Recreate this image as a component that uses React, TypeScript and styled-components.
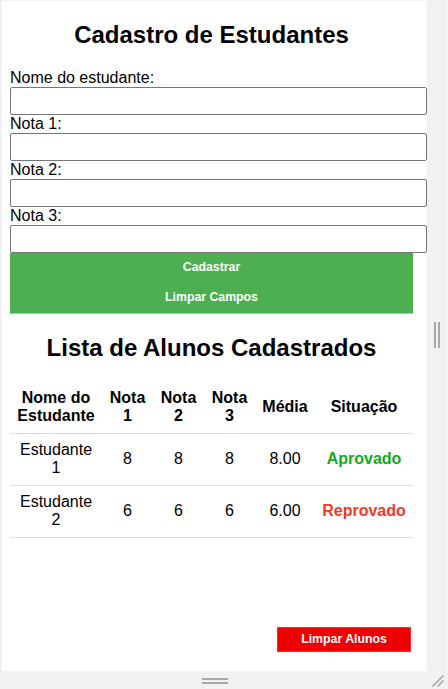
import React from "react";
import styled, { createGlobalStyle } from "styled-components";

const Global = createGlobalStyle`
  html, body { margin: 0; padding: 0; }
  body {
    background: #f0f1f3;
    font-family: "Liberation Sans", Arial, sans-serif;
    color: #000;
  }
`;

const Frame = styled.div`
  display: grid;
  grid-template-columns: 425px 1fr;
  grid-template-rows: 670px 1fr;
  padding: 1px 0 0 2px;
  height: 689px;
  width: 448px;
  box-sizing: border-box;
  background: #f0f1f3;
`;

const Panel = styled.main`
  background: #fff;
  display: flex;
  flex-direction: column;
  padding: 0 14px 0 8px;
  min-width: 0;
`;

const Title = styled.h2`
  font-size: 24px;
  font-weight: bold;
  text-align: center;
  margin: 0.83em 0;
  line-height: normal;
`;

const Form = styled.form`
  display: flex;
  flex-direction: column;
`;

const Label = styled.label`
  display: block;
  font-size: 16px;
  line-height: normal;
`;

const Input = styled.input`
  display: block;
  width: 100%;
  box-sizing: content-box;
  padding: 4px 6px;
  border: 1px solid #767676;
  border-radius: 2px;
  font-size: 16px;
  line-height: 18px;
  height: 18px;
  font-family: inherit;
  background: #fff;
  outline: none;
`;

const ButtonGroup = styled.div`
  display: flex;
  flex-direction: column;
  border-bottom: 1px solid #8fd48f;
`;

const GreenButton = styled.button`
  display: block;
  width: 100%;
  background: #4caf50;
  color: #fff;
  border: none;
  padding: 7.5px 0;
  font-family: inherit;
  font-size: 12.3px;
  font-weight: bold;
  line-height: 15px;
  cursor: pointer;
`;

const Table = styled.table`
  width: 100%;
  border-collapse: collapse;
  table-layout: fixed;
  font-size: 16px;
`;

const Col = styled.col<{ $w: number }>`
  width: ${(p) => p.$w}px;
`;

const Th = styled.th`
  padding: 7.5px 5px;
  text-align: center;
  font-weight: bold;
  border-bottom: 1px solid #dddddd;
  line-height: normal;
`;

const Td = styled.td`
  padding: 7.5px 5px;
  text-align: center;
  border-bottom: 1px solid #dddddd;
  line-height: normal;
`;

const StatusTd = styled(Td)<{ $ok: boolean }>`
  font-weight: bold;
  color: ${(p) => (p.$ok ? "#14a820" : "#f4391f")};
`;

const Footer = styled.div`
  margin-top: auto;
  display: flex;
  justify-content: flex-end;
  padding: 0 2px 19px 0;
`;

const RedButton = styled.button`
  background: #ee0000;
  color: #fff;
  border: 1px solid #f23030;
  padding: 4px 0;
  width: 134px;
  font-family: inherit;
  font-size: 12.3px;
  font-weight: bold;
  line-height: 14.6px;
  cursor: pointer;
`;

const SideGutter = styled.div`
  display: flex;
  align-items: center;
  padding-left: 7px;
  border-right: 2px solid #f6f6f7;
`;

const VGrip = styled.div`
  display: flex;
  gap: 2px;
  margin-top: -2px;
`;

const VBar = styled.span`
  width: 2px;
  height: 26px;
  background: #a8a8a8;
`;

const BottomBar = styled.div`
  display: flex;
  align-items: center;
  justify-content: center;
`;

const HGrip = styled.div`
  display: flex;
  flex-direction: column;
  gap: 2px;
  margin-top: 2px;
`;

const HBar = styled.span`
  width: 26px;
  height: 2px;
  background: #a8a8a8;
`;

const Corner = styled.div`
  display: flex;
  align-items: flex-end;
  justify-content: flex-start;
  padding: 0 0 2px 3px;
`;

const students = [
  { nome: "Estudante 1", n1: 8, n2: 8, n3: 8 },
  { nome: "Estudante 2", n1: 6, n2: 6, n3: 6 },
];

export default function App() {
  return (
    <>
      <Global />
      <Frame>
        <Panel>
          <Title>Cadastro de Estudantes</Title>
          <Form onSubmit={(e) => e.preventDefault()}>
            <Label htmlFor="nome">Nome do estudante:</Label>
            <Input id="nome" type="text" />
            <Label htmlFor="n1">Nota 1:</Label>
            <Input id="n1" type="text" />
            <Label htmlFor="n2">Nota 2:</Label>
            <Input id="n2" type="text" />
            <Label htmlFor="n3">Nota 3:</Label>
            <Input id="n3" type="text" />
            <ButtonGroup>
              <GreenButton type="submit">Cadastrar</GreenButton>
              <GreenButton type="button">Limpar Campos</GreenButton>
            </ButtonGroup>
          </Form>
          <Title>Lista de Alunos Cadastrados</Title>
          <Table>
            <colgroup>
              <Col $w={92} />
              <Col $w={51} />
              <Col $w={51} />
              <Col $w={51} />
              <Col $w={60} />
              <Col $w={98} />
            </colgroup>
            <thead>
              <tr>
                <Th>Nome do Estudante</Th>
                <Th>Nota 1</Th>
                <Th>Nota 2</Th>
                <Th>Nota 3</Th>
                <Th>Média</Th>
                <Th>Situação</Th>
              </tr>
            </thead>
            <tbody>
              {students.map((s) => {
                const media = (s.n1 + s.n2 + s.n3) / 3;
                const ok = media >= 7;
                return (
                  <tr key={s.nome}>
                    <Td>{s.nome}</Td>
                    <Td>{s.n1}</Td>
                    <Td>{s.n2}</Td>
                    <Td>{s.n3}</Td>
                    <Td>{media.toFixed(2)}</Td>
                    <StatusTd $ok={ok}>{ok ? "Aprovado" : "Reprovado"}</StatusTd>
                  </tr>
                );
              })}
            </tbody>
          </Table>
          <Footer>
            <RedButton type="button">Limpar Alunos</RedButton>
          </Footer>
        </Panel>
        <SideGutter>
          <VGrip>
            <VBar />
            <VBar />
          </VGrip>
        </SideGutter>
        <BottomBar>
          <HGrip>
            <HBar />
            <HBar />
          </HGrip>
        </BottomBar>
        <Corner>
          <svg width="14" height="14" viewBox="0 0 14 14">
            <path d="M13 3 L3 13 M13 8 L8 13" stroke="#a8a8a8" strokeWidth="1.6" strokeLinecap="round" fill="none" />
          </svg>
        </Corner>
      </Frame>
    </>
  );
}
